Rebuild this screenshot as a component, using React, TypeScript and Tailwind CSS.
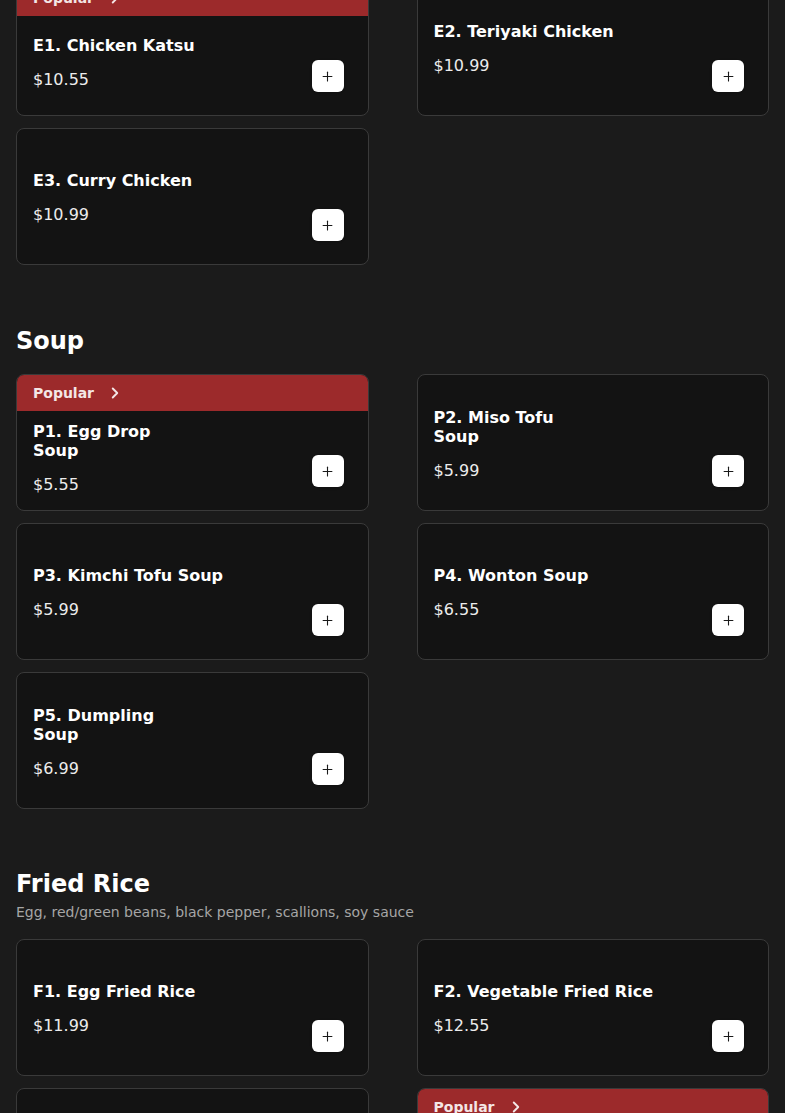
import { ChevronRight, Plus } from 'lucide-react';

interface Item {
  name: string[];
  price: string;
  popular?: boolean;
}

interface Section {
  title?: string;
  description?: string;
  spacing: string;
  items: Item[];
}

const SECTIONS: Section[] = [
  {
    spacing: '',
    items: [
      { name: ['E1. Chicken Katsu'], price: '$10.55', popular: true },
      { name: ['E2. Teriyaki Chicken'], price: '$10.99' },
      { name: ['E3. Curry Chicken'], price: '$10.99' },
    ],
  },
  {
    title: 'Soup',
    spacing: 'mt-[60px]',
    items: [
      { name: ['P1. Egg Drop', 'Soup'], price: '$5.55', popular: true },
      { name: ['P2. Miso Tofu', 'Soup'], price: '$5.99' },
      { name: ['P3. Kimchi Tofu Soup'], price: '$5.99' },
      { name: ['P4. Wonton Soup'], price: '$6.55' },
      { name: ['P5. Dumpling', 'Soup'], price: '$6.99' },
    ],
  },
  {
    title: 'Fried Rice',
    description: 'Egg, red/green beans, black pepper, scallions, soy sauce',
    spacing: 'mt-[59px]',
    items: [
      { name: ['F1. Egg Fried Rice'], price: '$11.99' },
      { name: ['F2. Vegetable Fried Rice'], price: '$12.55' },
      { name: ['F3. Chicken Fried Rice'], price: '$12.55' },
      { name: ['F4. Beef Fried Rice'], price: '$13.55', popular: true },
    ],
  },
];

function MenuCard({ item }: { item: Item }) {
  return (
    <div className="h-[137px] flex flex-col rounded-lg border border-[#3a3a3a] bg-[#131313] overflow-hidden">
      {item.popular && (
        <div className="h-9 shrink-0 flex items-center gap-3 px-4 bg-[#9c2a2b] text-[#f4e6e6]">
          <span className="text-sm font-bold">Popular</span>
          <ChevronRight size={18} strokeWidth={2.5} />
        </div>
      )}
      <div className="flex-1 flex items-end justify-between pl-4 pr-6">
        <div className={`self-center ${item.popular ? 'mb-[6px]' : 'mt-[2px]'}`}>
          <div className="text-base font-bold leading-[19px] text-white">
            {item.name.map((line, i) => (
              <div key={i}>{line}</div>
            ))}
          </div>
          <div className="mt-[15px] text-base leading-[19px] text-[#ececec]">{item.price}</div>
        </div>
        <button
          type="button"
          className="mb-[23px] w-8 h-8 shrink-0 flex items-center justify-center rounded-md bg-white text-[#1a1a1a] shadow-sm"
        >
          <Plus size={15} strokeWidth={1.75} />
        </button>
      </div>
    </div>
  );
}

export default function App() {
  return (
    <div className="min-h-screen overflow-hidden bg-[#1b1b1b] font-['DejaVu_Sans',sans-serif] text-white">
      <div className="-mt-[21px] px-4 pb-12">
        {SECTIONS.map((s, i) => (
          <section key={i} className={s.spacing}>
            {s.title && <h2 className="text-2xl font-bold leading-8">{s.title}</h2>}
            {s.description && (
              <p className="mt-[2px] text-sm leading-5 text-[#a6a6a6]">{s.description}</p>
            )}
            <div className={`grid grid-cols-2 gap-x-12 gap-y-3 ${s.title ? 'mt-[17px]' : ''}`}>
              {s.items.map((item) => (
                <MenuCard key={item.name.join(' ')} item={item} />
              ))}
            </div>
          </section>
        ))}
      </div>
    </div>
  );
}
